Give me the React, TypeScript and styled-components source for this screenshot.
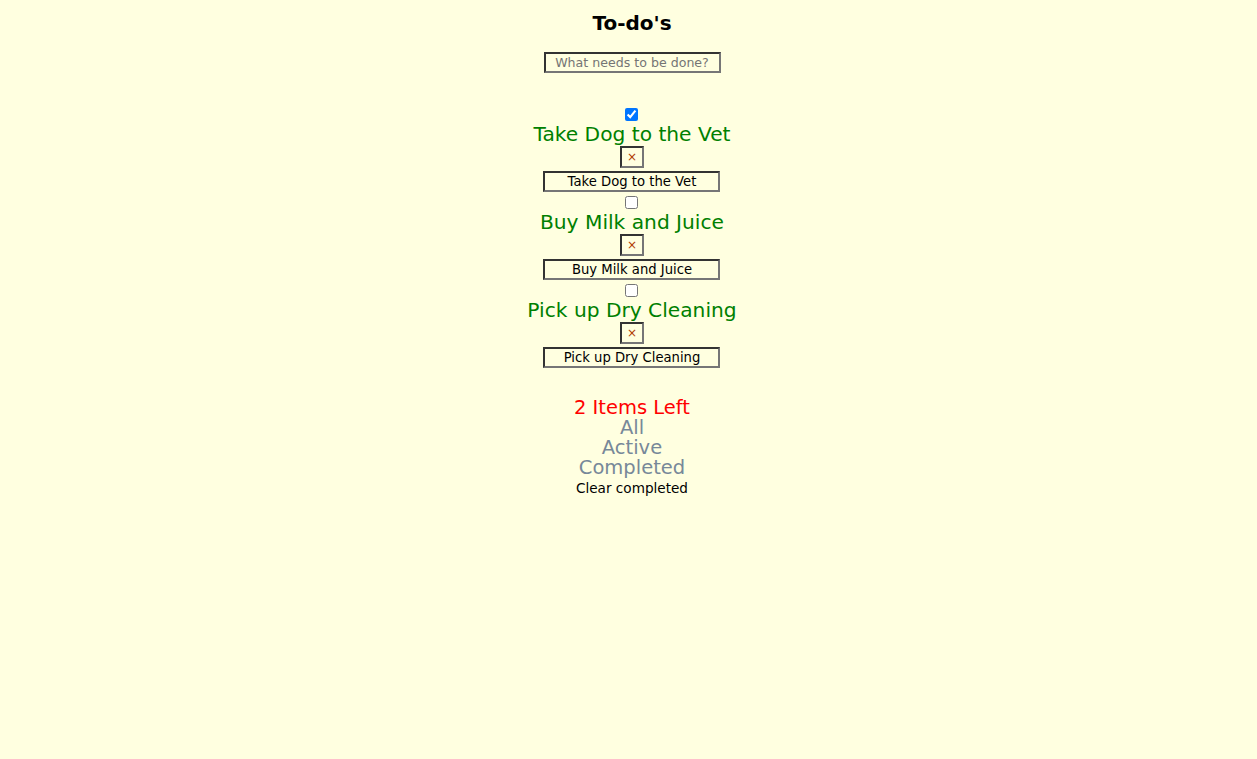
import React from "react";
import styled, { createGlobalStyle } from "styled-components";

const Global = createGlobalStyle`
  html, body { margin: 0; padding: 0; background: #ffffe0; }
  body { font-family: "DejaVu Sans", Verdana, sans-serif; }
`;

const Page = styled.div`
  display: flex;
  flex-direction: column;
  align-items: center;
  min-height: 759px;
  padding-left: 7px;
  background: #ffffe0;
`;

const Title = styled.h1`
  margin: 12px 0 0;
  font-size: 20px;
  line-height: 23px;
  font-weight: bold;
  color: #000;
`;

const Field = styled.input<{ $center?: boolean }>`
  box-sizing: border-box;
  width: 177px;
  height: 21px;
  padding: 1px 2px;
  border: 2px solid;
  border-color: #333 #767676 #767676 #333;
  background: transparent;
  font-family: "DejaVu Sans", Verdana, sans-serif;
  font-size: 13.2px;
  color: #000;
  text-align: ${(p) => (p.$center ? "center" : "left")};
  outline: none;
  &::placeholder { color: #757575; text-align: center; font-size: 12.6px; }
`;

const NewField = styled(Field)`
  margin-top: 17px;
`;

const EditField = styled(Field)`
  margin-top: 1px;
`;

const List = styled.ul`
  list-style: none;
  margin: 32px 0 0;
  padding: 0;
  display: flex;
  flex-direction: column;
  align-items: center;
`;

const Item = styled.li`
  display: flex;
  flex-direction: column;
  align-items: center;
  height: 88px;
`;

const Check = styled.input`
  width: 13px;
  height: 13px;
  margin: 3px 0 2px;
`;

const Label = styled.label`
  font-size: 20.2px;
  line-height: 23px;
  color: green;
`;

const Destroy = styled.button`
  box-sizing: border-box;
  width: 24px;
  height: 22px;
  margin-bottom: 2px;
  padding: 0;
  border: 2px solid;
  border-color: #333 #767676 #767676 #333;
  background: transparent;
  color: #b03a00;
  font-family: "DejaVu Sans", sans-serif;
  font-size: 12px;
  line-height: 16px;
`;

const Footer = styled.div`
  margin-top: 29px;
  display: flex;
  flex-direction: column;
  align-items: center;
`;

const Count = styled.span`
  font-size: 19.5px;
  line-height: 20px;
  color: red;
`;

const Filter = styled.a`
  font-size: 19.5px;
  line-height: 20px;
  color: #778899;
  text-decoration: none;
`;

const Clear = styled.button`
  margin: 1px 0 0;
  padding: 0;
  border: none;
  background: transparent;
  font-family: "DejaVu Sans", sans-serif;
  font-size: 13.6px;
  line-height: 18px;
  color: #000;
`;

const todos = [
  { text: "Take Dog to the Vet", done: true },
  { text: "Buy Milk and Juice", done: false },
  { text: "Pick up Dry Cleaning", done: false },
];

export default function App() {
  return (
    <Page>
      <Global />
      <Title>To-do's</Title>
      <NewField placeholder="What needs to be done?" />
      <List>
        {todos.map((t) => (
          <Item key={t.text}>
            <Check type="checkbox" defaultChecked={t.done} />
            <Label>{t.text}</Label>
            <Destroy>×</Destroy>
            <EditField $center defaultValue={t.text} />
          </Item>
        ))}
      </List>
      <Footer>
        <Count>2 Items Left</Count>
        <Filter>All</Filter>
        <Filter>Active</Filter>
        <Filter>Completed</Filter>
        <Clear>Clear completed</Clear>
      </Footer>
    </Page>
  );
}
